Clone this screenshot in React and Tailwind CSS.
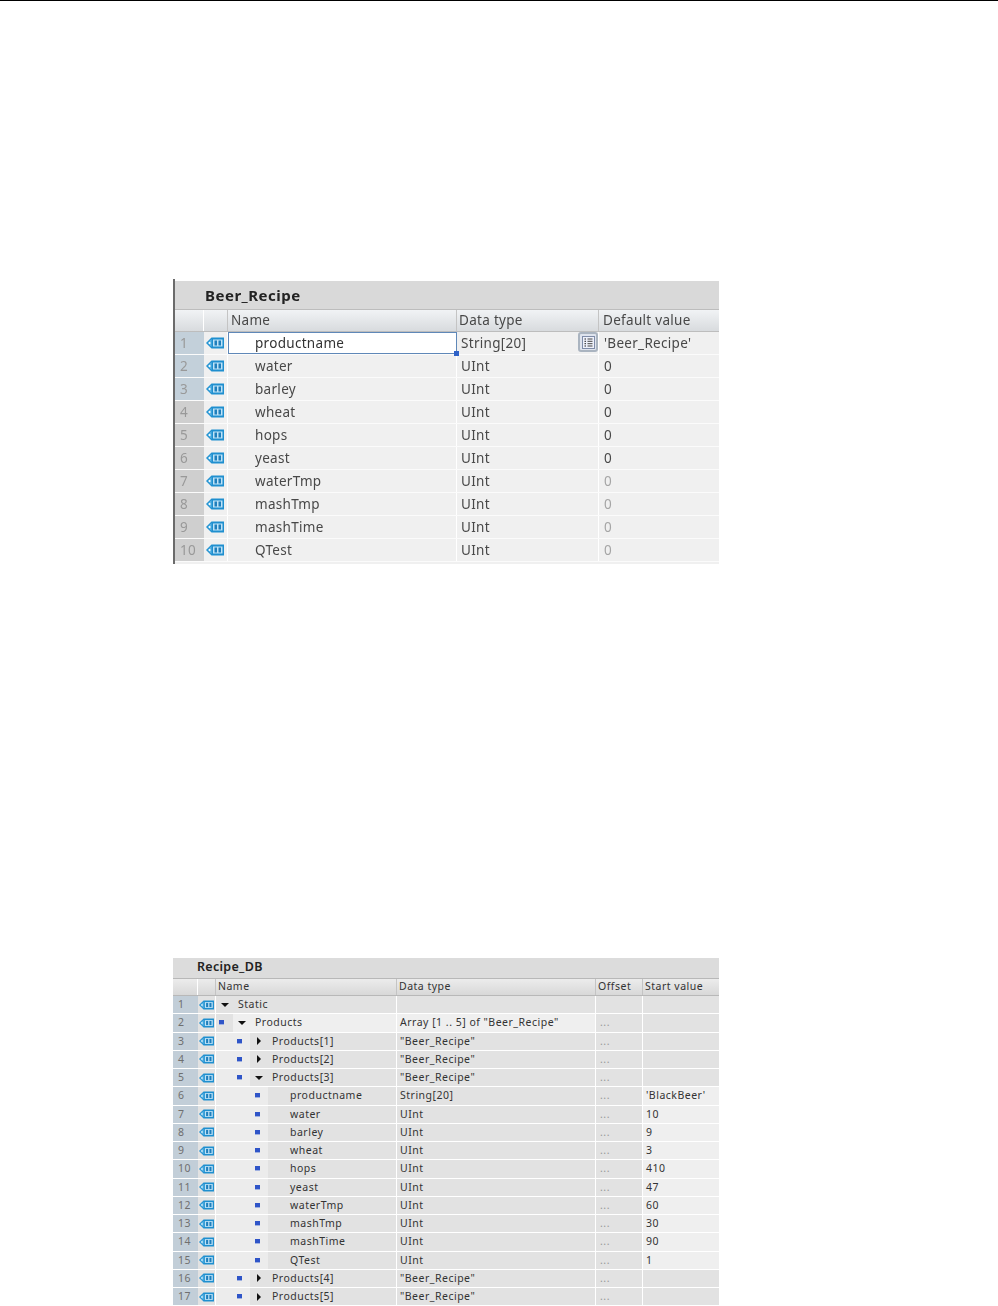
const font = "font-['Noto_Sans','Open_Sans',sans-serif]";

const beerRows = [
  ['productname', 'String[20]', "'Beer_Recipe'"],
  ['water', 'UInt', '0'],
  ['barley', 'UInt', '0'],
  ['wheat', 'UInt', '0'],
  ['hops', 'UInt', '0'],
  ['yeast', 'UInt', '0'],
  ['waterTmp', 'UInt', '0'],
  ['mashTmp', 'UInt', '0'],
  ['mashTime', 'UInt', '0'],
  ['QTest', 'UInt', '0'],
];

const dbRows = [
  { name: 'Static', level: 0, caret: 'down', type: '', offset: false, value: '' },
  { name: 'Products', level: 1, caret: 'down', type: 'Array [1 .. 5] of "Beer_Recipe"', offset: true, value: '', light: true },
  { name: 'Products[1]', level: 2, caret: 'right', type: '"Beer_Recipe"', offset: true, value: '' },
  { name: 'Products[2]', level: 2, caret: 'right', type: '"Beer_Recipe"', offset: true, value: '' },
  { name: 'Products[3]', level: 2, caret: 'down', type: '"Beer_Recipe"', offset: true, value: '' },
  { name: 'productname', level: 3, type: 'String[20]', offset: true, value: "'BlackBeer'", lightValue: true },
  { name: 'water', level: 3, type: 'UInt', offset: true, value: '10', lightValue: true },
  { name: 'barley', level: 3, type: 'UInt', offset: true, value: '9', lightValue: true },
  { name: 'wheat', level: 3, type: 'UInt', offset: true, value: '3', lightValue: true },
  { name: 'hops', level: 3, type: 'UInt', offset: true, value: '410', lightValue: true },
  { name: 'yeast', level: 3, type: 'UInt', offset: true, value: '47', lightValue: true },
  { name: 'waterTmp', level: 3, type: 'UInt', offset: true, value: '60', lightValue: true },
  { name: 'mashTmp', level: 3, type: 'UInt', offset: true, value: '30', lightValue: true },
  { name: 'mashTime', level: 3, type: 'UInt', offset: true, value: '90', lightValue: true },
  { name: 'QTest', level: 3, type: 'UInt', offset: true, value: '1', lightValue: true },
  { name: 'Products[4]', level: 2, caret: 'right', type: '"Beer_Recipe"', offset: true, value: '' },
  { name: 'Products[5]', level: 2, caret: 'right', type: '"Beer_Recipe"', offset: true, value: '' },
];

const TagIcon = ({ className }) => (
  <svg viewBox="0 0 18 12" className={className}>
    <path d="M0 6 L5.5 0.5 H18 V11.5 H5.5 Z" fill="#1f8fcf" />
    <path d="M1.5 6 L5.5 2 V10 Z" fill="#5db6e6" />
    <rect x="7" y="2.5" width="9.5" height="7" fill="#bfe3f7" />
    <rect x="8.5" y="3.5" width="2.5" height="5" fill="#1f7fbc" />
    <rect x="12.5" y="3.5" width="2.5" height="5" fill="#1f7fbc" />
    <circle cx="3.6" cy="6" r="1" fill="#ffffff" />
  </svg>
);

const ListIcon = () => (
  <svg viewBox="0 0 13 13" className="w-[13px] h-[13px]">
    <rect x="0.5" y="0.5" width="12" height="12" fill="#eef1fb" stroke="#7f8ca8" />
    <path d="M2.5 3 H4 M2.5 5.3 H4 M2.5 7.7 H4 M2.5 10 H4" stroke="#222" />
    <path d="M5.5 3 H10.5 M5.5 5.3 H10.5 M5.5 7.7 H10.5 M5.5 10 H10.5" stroke="#444" />
  </svg>
);

const Marker = () => (
  <span className="block w-[5px] h-[5px] bg-[#2f55c8] border-b border-[#9fb0e0]" />
);

const Caret = ({ dir }) => (
  <svg viewBox="0 0 8 8" className="w-[8px] h-[8px]">
    {dir === 'down' ? <path d="M0 2 H8 L4 6 Z" fill="#111" /> : <path d="M2 0 V8 L6 4 Z" fill="#111" />}
  </svg>
);

const BeerRecipeTable = () => (
  <div className={`${font} w-[546px] h-[285px] ml-[173px] mt-[278px] border-l-2 border-[#6b6b6b] bg-[#f0f0f0] text-[13.5px] tracking-[0.3px] text-[#484848] blur-[0.45px]`}>
    <div className="h-[2px] bg-white" />
    <div className="h-[28px] flex items-center pl-[30px] bg-[#d9d9d9] text-[15px] tracking-[0.5px] font-bold text-[#222]">Beer_Recipe</div>
    <div className="flex h-[23px] border-y border-[#bdbdbd] bg-gradient-to-b from-[#f1f3f5] to-[#d8dbde]">
      <div className="w-[29px] border-r border-white" />
      <div className="w-[24px] border-r border-[#c4c4c4]" />
      <div className="w-[229px] pl-[3px] border-r border-[#c4c4c4] leading-[20px]">Name</div>
      <div className="w-[142px] pl-[2px] border-r border-[#c4c4c4] leading-[20px]">Data type</div>
      <div className="flex-1 pl-[4px] leading-[20px]">Default value</div>
    </div>
    {beerRows.map((row, i) => (
      <div key={row[0]} className="flex h-[23px] border-b border-[#fbfbfb] leading-[23px]">
        <div className={`w-[29px] pl-[5px] text-[#999] ${i < 3 ? 'bg-[#c3d0da]' : 'bg-[#cfcfcf]'}`}>{i + 1}</div>
        <div className="w-[24px] flex items-center justify-center pr-[1px] border-r border-white">
          <TagIcon className="w-[18px] h-[12px]" />
        </div>
        {i === 0 ? (
          <div className="relative w-[229px] pl-[26px] bg-white border border-[#5f88b8] leading-[20px] text-[#333]">
            {row[0]}
            <span className="absolute -right-[3px] -bottom-[3px] w-[5px] h-[5px] bg-[#2f62c8]" />
          </div>
        ) : (
          <div className="w-[229px] pl-[27px] border-r border-white">{row[0]}</div>
        )}
        <div className="relative w-[142px] pl-[4px] border-r border-white">
          {row[1]}
          {i === 0 && (
            <span className="absolute right-0 top-0 w-[20px] h-[20px] rounded-[3px] border-2 border-[#aab4c0] bg-[#dfe4ee] flex items-center justify-center">
              <ListIcon />
            </span>
          )}
        </div>
        <div className={`flex-1 pl-[5px] ${i > 5 ? 'text-[#a5a5a5]' : ''}`}>{row[2]}</div>
      </div>
    ))}
  </div>
);

// width of the shaded indent in front of the caret, and where its marker sits
const shadeWidth = ['w-0', 'w-[17px]', 'w-[34px]', 'w-[52px]'];
const markerRight = ['', 'mr-[9px]', 'mr-[8px]', 'mr-[8px]'];

const RecipeDbTable = () => (
  <div className={`${font} w-[546px] ml-[173px] mt-[394px] bg-[#e2e2e2] text-[10.5px] tracking-[0.5px] text-[#333]`}>
    <div className="h-[20px] flex items-center pl-[24px] pb-[2px] bg-[#dcdcdc] text-[12.5px] tracking-[0.3px] font-semibold text-[#222]">Recipe_DB</div>
    <div className="flex h-[18px] border-y border-[#b8b8b8] bg-gradient-to-b from-[#ececec] to-[#d8d8d8] leading-[15px]">
      <div className="w-[25px] border-r border-white" />
      <div className="w-[18px] border-r border-[#c4c4c4]" />
      <div className="w-[181px] pl-[2px] border-r border-[#c4c4c4]">Name</div>
      <div className="w-[199px] pl-[2px] border-r border-[#c4c4c4]">Data type</div>
      <div className="w-[47px] pl-[2px] border-r border-[#c4c4c4]">Offset</div>
      <div className="flex-1 pl-[2px]">Start value</div>
    </div>
    {dbRows.map((row, i) => (
      <div key={i} className="flex h-[18.25px] border-b border-white leading-[17px]">
        <div className="w-[25px] pl-[5px] bg-[#c2ced8] text-[#6f6f6f]">{i + 1}</div>
        <div className="w-[18px] flex items-center justify-center border-r border-white">
          <TagIcon className="w-[15px] h-[10px]" />
        </div>
        <div className="w-[181px] flex border-r border-white">
          <div className={`${shadeWidth[row.level]} shrink-0 flex items-center justify-end ${row.level > 1 ? 'bg-[#ececec]' : ''}`}>
            {row.level > 0 && (
              <span className={markerRight[row.level]}>
                <Marker />
              </span>
            )}
          </div>
          <div className={`flex-1 flex ${row.light ? 'bg-[#efefef]' : ''}`}>
            {row.caret && (
              <div className="w-[17px] shrink-0 flex items-center justify-center">
                <Caret dir={row.caret} />
              </div>
            )}
            <div className={row.level === 3 ? 'pl-[22px]' : 'pl-[5px]'}>{row.name}</div>
          </div>
        </div>
        <div className={`w-[199px] pl-[3px] border-r border-white whitespace-nowrap ${row.light ? 'bg-[#efefef]' : ''}`}>{row.type}</div>
        <div className="w-[47px] pl-[4px] border-r border-white text-[#999]">{row.offset ? '...' : ''}</div>
        <div className={`flex-1 pl-[3px] ${row.lightValue ? 'bg-[#efefef]' : ''}`}>{row.value}</div>
      </div>
    ))}
  </div>
);

const App = () => (
  <div className="w-[998px] h-[1306px] bg-white overflow-hidden">
    <div className="h-px bg-black" />
    <BeerRecipeTable />
    <RecipeDbTable />
  </div>
);

export default App;
